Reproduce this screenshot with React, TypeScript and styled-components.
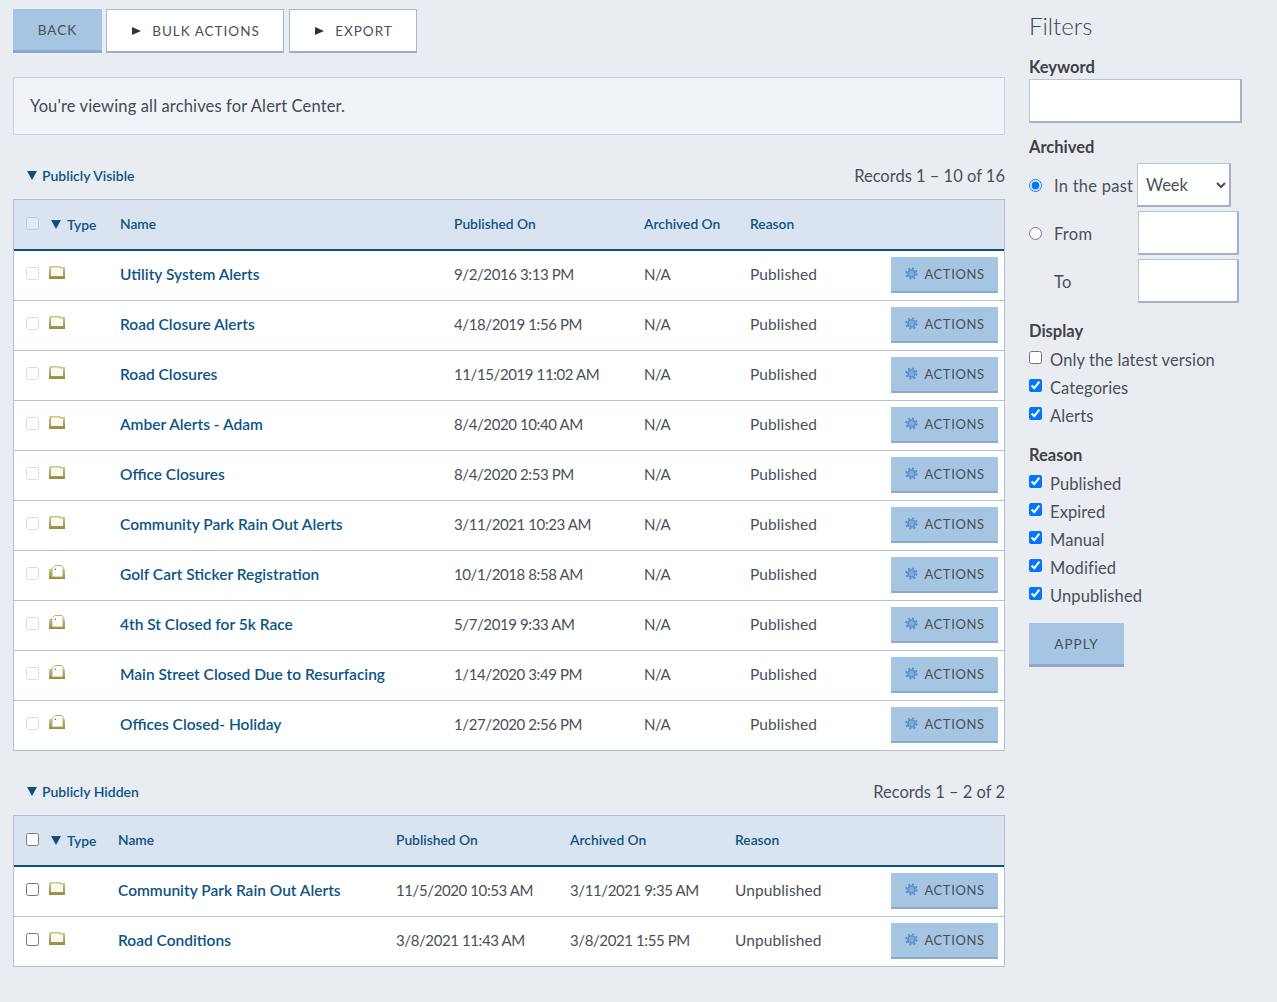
import { FC } from 'react';
import styled, { createGlobalStyle } from 'styled-components';

interface RecordRow {
    kind: 'folder' | 'doc';
    name: string;
    published: string;
    archived: string;
    reason: string;
}

const visibleRows: RecordRow[] = [
    { kind: 'folder', name: 'Utility System Alerts', published: '9/2/2016 3:13 PM', archived: 'N/A', reason: 'Published' },
    { kind: 'folder', name: 'Road Closure Alerts', published: '4/18/2019 1:56 PM', archived: 'N/A', reason: 'Published' },
    { kind: 'folder', name: 'Road Closures', published: '11/15/2019 11:02 AM', archived: 'N/A', reason: 'Published' },
    { kind: 'folder', name: 'Amber Alerts - Adam', published: '8/4/2020 10:40 AM', archived: 'N/A', reason: 'Published' },
    { kind: 'folder', name: 'Office Closures', published: '8/4/2020 2:53 PM', archived: 'N/A', reason: 'Published' },
    { kind: 'folder', name: 'Community Park Rain Out Alerts', published: '3/11/2021 10:23 AM', archived: 'N/A', reason: 'Published' },
    { kind: 'doc', name: 'Golf Cart Sticker Registration', published: '10/1/2018 8:58 AM', archived: 'N/A', reason: 'Published' },
    { kind: 'doc', name: '4th St Closed for 5k Race', published: '5/7/2019 9:33 AM', archived: 'N/A', reason: 'Published' },
    { kind: 'doc', name: 'Main Street Closed Due to Resurfacing', published: '1/14/2020 3:49 PM', archived: 'N/A', reason: 'Published' },
    { kind: 'doc', name: 'Offices Closed- Holiday', published: '1/27/2020 2:56 PM', archived: 'N/A', reason: 'Published' },
];

const hiddenRows: RecordRow[] = [
    { kind: 'folder', name: 'Community Park Rain Out Alerts', published: '11/5/2020 10:53 AM', archived: '3/11/2021 9:35 AM', reason: 'Unpublished' },
    { kind: 'folder', name: 'Road Conditions', published: '3/8/2021 11:43 AM', archived: '3/8/2021 1:55 PM', reason: 'Unpublished' },
];

const GlobalStyle = createGlobalStyle`
    body {
        margin: 0;
        background: #e9edf2;
        color: #3f4650;
        font-family: 'Lato', 'Noto Sans', sans-serif;
        font-size: 16px;
    }
    * {
        box-sizing: border-box;
    }
`;

const Page = styled.div`
    display: flex;
    gap: 24px;
    padding: 9px 0 35px 13px;
    width: 1277px;
`;

const Main = styled.main`
    width: 992px;
    flex-shrink: 0;
`;

const Toolbar = styled.div`
    display: flex;
    gap: 4px;
    margin-bottom: 24px;

    & > :last-child {
        margin-left: 1px;
    }
`;

const Button = styled.button<{ $w: number; $outline?: boolean }>`
    width: ${(p) => p.$w}px;
    height: 44px;
    padding: 0 0 0 ${(p) => (p.$outline ? '2px' : '0')};
    font-family: inherit;
    font-size: 13.5px;
    letter-spacing: 1px;
    color: #4a4f58;
    background: ${(p) => (p.$outline ? '#ffffff' : '#a6c5e3')};
    border: ${(p) => (p.$outline ? '1px solid #a9b8c8' : '0')};
    border-bottom: ${(p) => (p.$outline ? '2px' : '3px')} solid ${(p) => (p.$outline ? '#9fb0c3' : '#8ba9c9')};
    display: flex;
    align-items: center;
    justify-content: center;
    gap: 11px;
`;

const Play = styled.span`
    width: 0;
    height: 0;
    border-left: 9px solid #2f3338;
    border-top: 4.5px solid transparent;
    border-bottom: 4.5px solid transparent;
`;

const Notice = styled.div`
    height: 58px;
    display: flex;
    align-items: center;
    padding-left: 16px;
    background: #f0f3f8;
    border: 1px solid #c5d2df;
    font-size: 16.5px;
    letter-spacing: 0.14px;
    color: #444a52;
    margin-bottom: 24px;
`;

const SectionHead = styled.div`
    height: 40px;
    display: flex;
    align-items: center;
    justify-content: space-between;
    padding-left: 14px;
`;

const SectionTitle = styled.div`
    display: flex;
    align-items: center;
    gap: 5px;
    color: #0d5486;
    font-size: 14px;
    font-weight: 600;
    margin-top: -7px;
`;

const Caret = styled.span`
    width: 0;
    height: 0;
    border-top: 9px solid #0d4f7f;
    border-left: 5px solid transparent;
    border-right: 5px solid transparent;
`;

const Records = styled.div`
    font-size: 16.5px;
    color: #4a5058;
    margin-top: -6px;
`;

const Table = styled.div`
    border: 1px solid #b3c2d3;
    background: #ffffff;
    margin-bottom: 24px;
`;

const HeadRow = styled.div<{ $cols: string }>`
    display: grid;
    grid-template-columns: ${(p) => p.$cols};
    align-items: center;
    height: 51px;
    padding-bottom: 2px;
    background: #dae4f0;
    border-bottom: 2px solid #0d5486;
    color: #0d5486;
    font-size: 13.8px;
    font-weight: 600;
`;

const Row = styled.div<{ $cols: string }>`
    display: grid;
    grid-template-columns: ${(p) => p.$cols};
    align-items: center;
    height: 50px;
    border-bottom: 1px solid #b3c2d3;
    font-size: 15.5px;
    color: #4a5058;

    &:last-child {
        height: 49px;
        border-bottom: 0;
    }
`;

const TypeHead = styled.div`
    display: flex;
    align-items: center;
    gap: 6px;
    margin-top: 2px;
`;

const CheckCell = styled.div<{ $head?: boolean }>`
    display: flex;
    padding-left: 12px;
    margin-top: ${(p) => (p.$head ? '-1px' : '-5px')};
`;

const RowCheck = styled.input.attrs({ type: 'checkbox' })<{ $faded?: boolean }>`
    width: 13px;
    height: 13px;
    margin: 0;
    opacity: ${(p) => (p.$faded ? 0.25 : 1)};
`;

const IconCell = styled.div`
    display: flex;
    margin-top: -7px;
    margin-left: -2px;
`;

const RowName = styled.a`
    color: #0d5486;
    font-size: 15.5px;
    font-weight: 600;
    padding-bottom: 4px;
`;

const DateCell = styled.div`
    font-size: 15px;
    letter-spacing: -0.4px;
    padding-bottom: 4px;
`;

const ReasonCell = styled.div`
    letter-spacing: 0.1px;
    padding-bottom: 4px;
`;

const ActionCell = styled.div`
    display: flex;
    padding-bottom: 2px;
`;

const ActionButton = styled.button`
    width: 107px;
    height: 36px;
    padding: 0 0 0 1px;
    font-family: inherit;
    font-size: 13px;
    letter-spacing: 0.6px;
    color: #4a4f58;
    background: #a6c5e3;
    border: 0;
    border-bottom: 2px solid #8ba9c9;
    display: flex;
    align-items: center;
    justify-content: center;
    gap: 6px;
`;

const Side = styled.aside`
    flex: 1;
`;

const FiltersTitle = styled.h2`
    margin: 0 0 14px;
    font-size: 24px;
    line-height: 34px;
    font-weight: 300;
    color: #3f4650;
`;

const GroupLabel = styled.div`
    font-size: 16.5px;
    font-weight: 700;
    line-height: 20px;
    color: #3f4246;
`;

const TextField = styled.input.attrs({ type: 'text' })<{ $w: number }>`
    display: block;
    width: ${(p) => p.$w}px;
    height: 44px;
    background: #ffffff;
    border: 1px solid #b8c5d3;
    border-bottom: 2px solid #a3b2c4;
    border-right: 2px solid #a3b2c4;
    padding: 0;
`;

const KeywordBlock = styled.div`
    display: flex;
    flex-direction: column;
    gap: 2px;
    margin-bottom: 14px;
`;

const ArchivedGrid = styled.div`
    display: flex;
    flex-direction: column;
    gap: 4px;
    margin: 6px 0 18px;
`;

const ArchivedRow = styled.div`
    display: flex;
    align-items: center;
    height: 44px;
`;

const Radio = styled.input.attrs({ type: 'radio' })`
    width: 13px;
    height: 13px;
    margin: 0 12px 0 0;
`;

const RowLabel = styled.label<{ $w: number; $indent?: boolean }>`
    width: ${(p) => p.$w}px;
    margin-left: ${(p) => (p.$indent ? '25px' : '0')};
    padding-top: 2px;
    font-size: 16.5px;
    letter-spacing: 0.25px;
    color: #4a5058;
`;

const WeekSelect = styled.select`
    width: 94px;
    height: 44px;
    background: #ffffff;
    border: 1px solid #b8c5d3;
    border-bottom: 2px solid #a3b2c4;
    border-right: 2px solid #a3b2c4;
    border-radius: 0;
    font-family: inherit;
    font-size: 16.5px;
    color: #4a5058;
    padding-left: 4px;
`;

const CheckList = styled.div<{ $end?: number }>`
    display: flex;
    flex-direction: column;
    margin: 4px 0 ${(p) => p.$end ?? 16}px;
`;

const CheckRow = styled.label`
    display: flex;
    align-items: center;
    height: 28px;
    gap: 8px;
    font-size: 16.5px;
    letter-spacing: 0.1px;
    color: #4a5058;
    padding-top: 2px;
`;

const Check = styled.input.attrs({ type: 'checkbox' })`
    width: 13px;
    height: 13px;
    margin: -6px 0 0;
`;

const GearIcon: FC = () => (
    <svg width='13' height='13' viewBox='0 0 13 13'>
        <circle cx='6.5' cy='6.5' r='5.3' fill='none' stroke='#4d8cc6' strokeWidth='1.6' strokeDasharray='2 2.16' />
        <circle cx='6.5' cy='6.5' r='3.6' fill='#7fabd6' stroke='#4d8cc6' strokeWidth='1.4' />
    </svg>
);

const FolderIcon: FC<{ kind: RecordRow['kind']; id: string }> = ({ kind, id }) => (
    <svg width='16' height='15' viewBox='0 0 16 15'>
        <defs>
            <linearGradient id={id} x1='0' y1='0' x2='0' y2='1'>
                <stop offset='0' stopColor='#cfc995' />
                <stop offset='1' stopColor='#958a3e' />
            </linearGradient>
        </defs>
        {kind === 'folder' ? (
            <>
                <path d='M0 14 L0 3 L1 1 L11 1 L12 2 L16 2 L16 14 Z' fill={`url(#${id})`} />
                <path d='M2 11 L2 3.5 L3 2.5 L10 2.5 L11 3.5 L14 3.5 L14 11 Z' fill='#fbfaf0' />
            </>
        ) : (
            <>
                <path d='M0 14 L0 4 L16 4 L16 14 Z' fill={`url(#${id})`} />
                <path d='M3 12 L3 3.5 L6 0.5 L13 0.5 L14 1.5 L14 12 Z' fill='#ffffff' stroke='#a69c58' strokeWidth='0.8' />
                <path d='M5 5 L7 3 L7 5 Z' fill='#77746a' />
            </>
        )}
    </svg>
);

const RecordTable: FC<{ title: string; records: string; cols: string; rows: RecordRow[]; faded?: boolean }> = ({
    title,
    records,
    cols,
    rows,
    faded,
}) => (
    <>
        <SectionHead>
            <SectionTitle>
                <Caret />
                {title}
            </SectionTitle>
            <Records>{records}</Records>
        </SectionHead>
        <Table>
            <HeadRow $cols={cols}>
                <CheckCell $head>
                    <RowCheck $faded={faded} />
                </CheckCell>
                <TypeHead>
                    <Caret />
                    Type
                </TypeHead>
                <div>Name</div>
                <div>Published On</div>
                <div>Archived On</div>
                <div>Reason</div>
                <div />
            </HeadRow>
            {rows.map((row, index) => (
                <Row key={row.name} $cols={cols}>
                    <CheckCell>
                        <RowCheck $faded={faded} />
                    </CheckCell>
                    <IconCell>
                        <FolderIcon kind={row.kind} id={`${title}-${index}`.replace(' ', '-')} />
                    </IconCell>
                    <RowName>{row.name}</RowName>
                    <DateCell>{row.published}</DateCell>
                    <DateCell>{row.archived}</DateCell>
                    <ReasonCell>{row.reason}</ReasonCell>
                    <ActionCell>
                        <ActionButton>
                            <GearIcon />
                            ACTIONS
                        </ActionButton>
                    </ActionCell>
                </Row>
            ))}
        </Table>
    </>
);

const App: FC = () => (
    <Page>
        <GlobalStyle />
        <Main>
            <Toolbar>
                <Button $w={89}>BACK</Button>
                <Button $w={178} $outline>
                    <Play />
                    BULK ACTIONS
                </Button>
                <Button $w={128} $outline>
                    <Play />
                    EXPORT
                </Button>
            </Toolbar>
            <Notice>You're viewing all archives for Alert Center.</Notice>
            <RecordTable
                title='Publicly Visible'
                records='Records 1 – 10 of 16'
                cols='37px 69px 334px 190px 106px 141px 113px'
                rows={visibleRows}
                faded
            />
            <RecordTable
                title='Publicly Hidden'
                records='Records 1 – 2 of 2'
                cols='37px 67px 278px 174px 165px 156px 113px'
                rows={hiddenRows}
            />
        </Main>
        <Side>
            <FiltersTitle>Filters</FiltersTitle>
            <KeywordBlock>
                <GroupLabel>Keyword</GroupLabel>
                <TextField $w={213} />
            </KeywordBlock>
            <GroupLabel>Archived</GroupLabel>
            <ArchivedGrid>
                <ArchivedRow>
                    <Radio name='archived' defaultChecked />
                    <RowLabel $w={83}>In the past</RowLabel>
                    <WeekSelect defaultValue='Week'>
                        <option>Week</option>
                    </WeekSelect>
                </ArchivedRow>
                <ArchivedRow>
                    <Radio name='archived' />
                    <RowLabel $w={84}>From</RowLabel>
                    <TextField $w={101} />
                </ArchivedRow>
                <ArchivedRow>
                    <RowLabel $w={84} $indent>
                        To
                    </RowLabel>
                    <TextField $w={101} />
                </ArchivedRow>
            </ArchivedGrid>
            <GroupLabel>Display</GroupLabel>
            <CheckList>
                <CheckRow>
                    <Check />
                    Only the latest version
                </CheckRow>
                <CheckRow>
                    <Check defaultChecked />
                    Categories
                </CheckRow>
                <CheckRow>
                    <Check defaultChecked />
                    Alerts
                </CheckRow>
            </CheckList>
            <GroupLabel>Reason</GroupLabel>
            <CheckList $end={14}>
                {['Published', 'Expired', 'Manual', 'Modified', 'Unpublished'].map((label) => (
                    <CheckRow key={label}>
                        <Check defaultChecked />
                        {label}
                    </CheckRow>
                ))}
            </CheckList>
            <Button $w={95}>APPLY</Button>
        </Side>
    </Page>
);

export default App;
